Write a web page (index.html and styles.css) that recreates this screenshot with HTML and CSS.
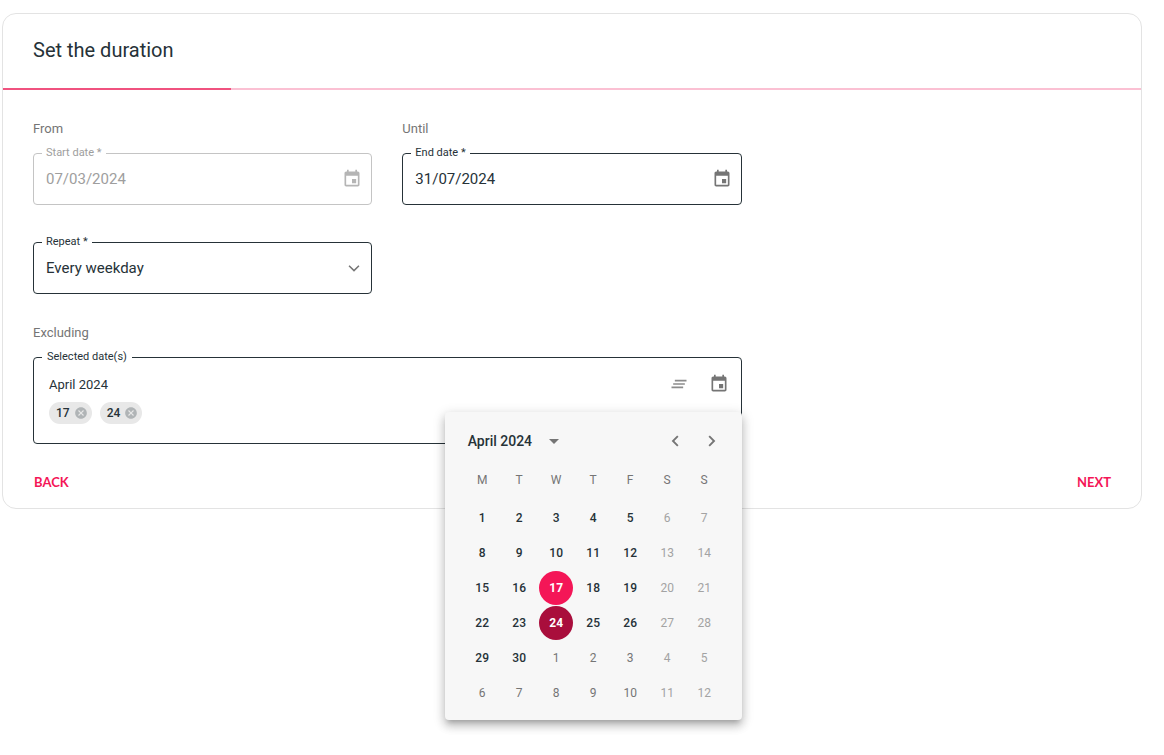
FILE: index.html
```
<!DOCTYPE html>
<html lang="en">
<head>
<meta charset="utf-8">
<title>Set the duration</title>
<link rel="stylesheet" href="styles.css">
</head>
<body>
<svg class="sprite" aria-hidden="true">
  <symbol id="i-event" viewBox="0 0 24 24"><path d="M17 12h-5v5h5v-5zM16 1v2H8V1H6v2H5c-1.110 0-1.990.9-1.990 2L3 19c0 1.100.890 2 2 2h14c1.100 0 2-.9 2-2V5c0-1.100-.9-2-2-2h-1V1h-2zm3 18H5V8h14v11z"/></symbol>
  <symbol id="i-clear" viewBox="0 0 24 24"><path d="M5 13h14v-2H5v2zm-2 4h14v-2H3v2zM7 7v2h14V7H7z"/></symbol>
  <symbol id="i-cancel" viewBox="0 0 24 24"><path d="M12 2C6.470 2 2 6.470 2 12s4.470 10 10 10 10-4.470 10-10S17.530 2 12 2zm5 13.590L15.590 17 12 13.410 8.410 17 7 15.590 10.590 12 7 8.410 8.410 7 12 10.590 15.590 7 17 8.410 13.410 12 17 15.590z"/></symbol>
  <symbol id="i-down" viewBox="0 0 24 24"><path d="M5.400 7.800 12 14.200l6.600-6.400L20.200 9.400 12 17.600 3.800 9.400z"/></symbol>
  <symbol id="i-left" viewBox="0 0 24 24"><path d="M16.200 7 14.600 5.400 8 12l6.600 6.600L16.200 17l-5-5z"/></symbol>
  <symbol id="i-right" viewBox="0 0 24 24"><path d="M9.400 5.400 7.800 7l5 5-5 5 1.600 1.600L16 12z"/></symbol>
</svg>

<main class="card">
  <header class="card-header"><h1 class="title">Set the duration</h1></header>
  <div class="progress" role="progressbar" aria-valuenow="20" aria-valuemin="0" aria-valuemax="100" aria-label="Progress">
    <div class="progress-bar" style="width: 20%"></div>
  </div>

  <form class="form">
    <section class="group">
      <h2 class="group-title">From</h2>
      <fieldset class="field field-disabled">
        <legend class="legend"><label for="start">Start date *</label></legend>
        <div class="control">
          <input class="input" id="start" type="text" value="07/03/2024" disabled>
          <button class="icon-button" type="button" aria-label="Open start calendar" disabled><svg class="icon"><use href="#i-event"/></svg></button>
        </div>
      </fieldset>
    </section>

    <section class="group">
      <h2 class="group-title">Until</h2>
      <fieldset class="field">
        <legend class="legend"><label for="end">End date *</label></legend>
        <div class="control">
          <input class="input" id="end" type="text" value="31/07/2024">
          <button class="icon-button" type="button" aria-label="Open end calendar"><svg class="icon"><use href="#i-event"/></svg></button>
        </div>
      </fieldset>
    </section>

    <section class="group group-first">
      <fieldset class="field">
        <legend class="legend"><label for="repeat">Repeat *</label></legend>
        <div class="control control-select">
          <select class="input select" id="repeat"><option>Every weekday</option></select>
          <svg class="icon chevron"><use href="#i-down"/></svg>
        </div>
      </fieldset>
    </section>

    <section class="group group-wide">
      <h2 class="group-title">Excluding</h2>
      <fieldset class="field">
        <legend class="legend legend-large">Selected date(s)</legend>
        <div class="dates">
          <div class="dates-list">
            <p class="month">April 2024</p>
            <ul class="chips">
              <li class="chip">17<button class="chip-remove" type="button" aria-label="Remove 17"><svg class="icon-small"><use href="#i-cancel"/></svg></button></li>
              <li class="chip">24<button class="chip-remove" type="button" aria-label="Remove 24"><svg class="icon-small"><use href="#i-cancel"/></svg></button></li>
            </ul>
          </div>
          <div class="dates-actions">
            <button class="icon-button" type="button" aria-label="Clear dates"><svg class="icon icon-light"><use href="#i-clear"/></svg></button>
            <button class="icon-button" type="button" aria-label="Choose dates"><svg class="icon"><use href="#i-event"/></svg></button>
          </div>
        </div>
      </fieldset>

      <div class="calendar" role="dialog" aria-label="Choose dates">
        <div class="calendar-header">
          <button class="period" type="button">April 2024<svg class="caret" viewBox="0 0 10 5"><path d="M0 0h10L5 5z"/></svg></button>
          <button class="nav" type="button" aria-label="Previous month"><svg class="icon"><use href="#i-left"/></svg></button>
          <button class="nav" type="button" aria-label="Next month"><svg class="icon"><use href="#i-right"/></svg></button>
        </div>
        <table class="days">
          <thead><tr><th>M</th><th>T</th><th>W</th><th>T</th><th>F</th><th>S</th><th>S</th></tr></thead>
          <tbody>
            <tr><td><button class="day" type="button">1</button></td><td><button class="day" type="button">2</button></td><td><button class="day" type="button">3</button></td><td><button class="day" type="button">4</button></td><td><button class="day" type="button">5</button></td><td><button class="day" type="button" disabled>6</button></td><td><button class="day" type="button" disabled>7</button></td></tr>
            <tr><td><button class="day" type="button">8</button></td><td><button class="day" type="button">9</button></td><td><button class="day" type="button">10</button></td><td><button class="day" type="button">11</button></td><td><button class="day" type="button">12</button></td><td><button class="day" type="button" disabled>13</button></td><td><button class="day" type="button" disabled>14</button></td></tr>
            <tr><td><button class="day" type="button">15</button></td><td><button class="day" type="button">16</button></td><td><button class="day selected" type="button">17</button></td><td><button class="day" type="button">18</button></td><td><button class="day" type="button">19</button></td><td><button class="day" type="button" disabled>20</button></td><td><button class="day" type="button" disabled>21</button></td></tr>
            <tr><td><button class="day" type="button">22</button></td><td><button class="day" type="button">23</button></td><td><button class="day selected active" type="button">24</button></td><td><button class="day" type="button">25</button></td><td><button class="day" type="button">26</button></td><td><button class="day" type="button" disabled>27</button></td><td><button class="day" type="button" disabled>28</button></td></tr>
            <tr><td><button class="day" type="button">29</button></td><td><button class="day" type="button">30</button></td><td><button class="day outside" type="button">1</button></td><td><button class="day outside" type="button">2</button></td><td><button class="day outside" type="button">3</button></td><td><button class="day" type="button" disabled>4</button></td><td><button class="day" type="button" disabled>5</button></td></tr>
            <tr><td><button class="day outside" type="button">6</button></td><td><button class="day outside" type="button">7</button></td><td><button class="day outside" type="button">8</button></td><td><button class="day outside" type="button">9</button></td><td><button class="day outside" type="button">10</button></td><td><button class="day" type="button" disabled>11</button></td><td><button class="day" type="button" disabled>12</button></td></tr>
          </tbody>
        </table>
      </div>
    </section>
  </form>

  <footer class="footer">
    <button class="link-button" type="button">BACK</button>
    <button class="link-button" type="button">NEXT</button>
  </footer>
</main>
</body>
</html>
```
FILE: styles.css
```
* { box-sizing: border-box; }

body {
  min-height: 100vh;
  margin: 0;
  padding: 13px 22px 13px 2px;
  background: #fff;
  color: #263238;
  font-family: Roboto, "Liberation Sans", sans-serif;
  font-size: 15px;
}

button, input, select { font: inherit; color: inherit; }
button { border: 0; padding: 0; background: none; cursor: pointer; }

.sprite { display: none; }
.icon { display: block; width: 20px; height: 20px; fill: #757575; }
.icon-light { fill: #8c8c8c; }

.card { border: 1px solid #e3e3e3; border-radius: 14px; }
.card-header { padding: 24px 30px 25px; }
.title { margin: 0; font-size: 20px; font-weight: 400; line-height: 25px; }

.progress { height: 2px; background: #fbc0d3; }
.progress-bar { height: 2px; background: #f0527f; }

.form {
  display: grid;
  grid-template-columns: repeat(3, 1fr);
  column-gap: 30px;
  row-gap: 30px;
  padding: 30px 30px 0;
}
.group { position: relative; }
.group-first { grid-column: 1; }
.group-wide { grid-column: 1 / span 2; }
.group-title {
  margin: 0 0 8px;
  color: #757575;
  font-size: 13px;
  font-weight: 400;
  line-height: 18px;
}

.field {
  min-width: 0;
  margin: 0;
  padding: 0 8px;
  border: 1px solid #263238;
  border-radius: 4px;
}
.legend { padding: 0 4px; font-size: 11px; line-height: 14px; }
.legend-large { padding: 0 5px; }
.field-disabled { border-color: #c4c4c4; color: #9e9e9e; }
.field-disabled .icon { fill: #b5b5b5; }

.control {
  display: flex;
  align-items: center;
  height: 44px;
  padding: 0 1px 6px 4px;
}
.input {
  flex: 1;
  min-width: 0;
  padding: 0;
  border: 0;
  outline: 0;
  background: transparent;
  line-height: 20px;
}
.select { appearance: none; }
.chevron { width: 16px; height: 16px; }
.icon-button { display: block; }

.dates { display: flex; justify-content: space-between; padding: 10px 4px 19px 7px; }
.month { margin: 2px 0 8px; font-size: 13px; line-height: 18px; }
.chips { display: flex; gap: 8px; margin: 0; padding: 0; list-style: none; }
.chip {
  display: flex;
  align-items: center;
  gap: 4px;
  height: 22px;
  padding: 0 4px 0 7px;
  border-radius: 11px;
  background: #e8e8e8;
  font-size: 12px;
  font-weight: 500;
}
.icon-small { display: block; width: 14px; height: 14px; fill: #b0b4b6; }
.dates-actions { display: flex; align-items: flex-start; gap: 20px; }

.calendar {
  position: absolute;
  top: 88px;
  right: 0;
  z-index: 1;
  width: 297px;
  padding: 10px 19px;
  border-radius: 4px;
  background: #f7f7f7;
  box-shadow: 0 5px 5px -3px rgba(0, 0, 0, .2), 0 6px 8px 1px rgba(0, 0, 0, .14), 0 3px 12px 2px rgba(0, 0, 0, .12);
}
.calendar-header { display: flex; align-items: center; height: 38px; margin-right: -8px; }
.period {
  display: flex;
  align-items: center;
  gap: 17px;
  margin-right: auto;
  padding-left: 4px;
  font-size: 14px;
  font-weight: 500;
}
.caret { width: 10px; height: 5px; fill: #757575; }
.nav { display: flex; justify-content: center; width: 37px; }

.days { width: 100%; border-collapse: collapse; table-layout: fixed; font-size: 12px; }
.days th { height: 40px; padding: 0; color: #757575; font-size: 12px; font-weight: 400; }
.days td { height: 35px; padding: 0; }
.day {
  display: block;
  width: 34px;
  height: 34px;
  margin: 0 auto;
  border-radius: 50%;
  font-size: 12px;
  font-weight: 500;
}
.day:disabled { color: #a3a3a3; font-weight: 400; }
.outside { color: #757575; font-weight: 400; }
.selected { background: #f41657; color: #fff; font-weight: 700; }
.active { background: #a90e3c; }

.footer { display: flex; justify-content: space-between; padding: 30px 30px 18px 31px; }
.link-button {
  color: #f41657;
  font-family: Lato, sans-serif;
  font-size: 13px;
  font-weight: 700;
  line-height: 16px;
}
```
